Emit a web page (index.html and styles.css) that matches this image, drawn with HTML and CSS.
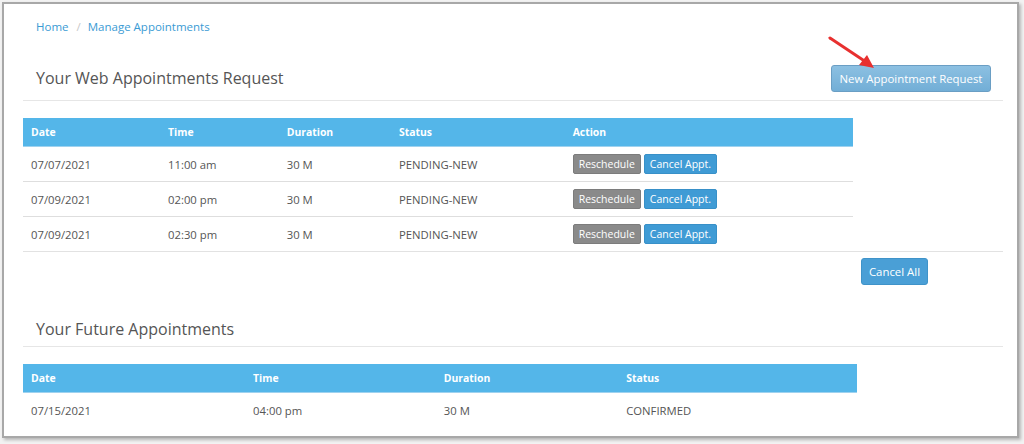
FILE: index.html
```html
<!DOCTYPE html>
<html>
<head>
<meta charset="utf-8">
<link rel="stylesheet" href="styles.css">
</head>
<body>
<div class="frame">
  <nav class="breadcrumb"><a>Home</a><span class="sep">/</span><a>Manage Appointments</a></nav>

  <div class="section-head">
    <h2>Your Web Appointments Request</h2>
    <button class="btn btn-new">New Appointment Request</button>
  </div>

  <table class="grid grid-req">
    <thead>
      <tr><th class="c1">Date</th><th class="c2">Time</th><th class="c3">Duration</th><th class="c4">Status</th><th class="c5">Action</th></tr>
    </thead>
    <tbody>
      <tr><td>07/07/2021</td><td>11:00 am</td><td>30 M</td><td>PENDING-NEW</td><td><span class="mini grey">Reschedule</span><span class="mini blue">Cancel Appt.</span></td></tr>
      <tr><td>07/09/2021</td><td>02:00 pm</td><td>30 M</td><td>PENDING-NEW</td><td><span class="mini grey">Reschedule</span><span class="mini blue">Cancel Appt.</span></td></tr>
      <tr><td>07/09/2021</td><td>02:30 pm</td><td>30 M</td><td>PENDING-NEW</td><td><span class="mini grey">Reschedule</span><span class="mini blue">Cancel Appt.</span></td></tr>
    </tbody>
  </table>

  <div class="actions">
    <div class="actions-inner"><button class="btn btn-cancel-all">Cancel All</button></div>
  </div>

  <div class="section-head section-head-2">
    <h2>Your Future Appointments</h2>
  </div>

  <table class="grid grid-future">
    <thead>
      <tr><th class="d1">Date</th><th class="d2">Time</th><th class="d3">Duration</th><th class="d4">Status</th></tr>
    </thead>
    <tbody>
      <tr><td>07/15/2021</td><td>04:00 pm</td><td>30 M</td><td>CONFIRMED</td></tr>
    </tbody>
  </table>

  <svg class="arrow" width="60" height="44" viewBox="0 0 60 44">
    <line x1="4" y1="3" x2="40" y2="27" stroke="#e8302f" stroke-width="3" stroke-linecap="round"/>
    <polygon points="48,33 33,30 41,20" fill="#e8302f"/>
  </svg>
</div>
</body>
</html>
```

FILE: styles.css
```css
html, body {
  margin: 0;
  padding: 0;
  background: #f2f2f2;
}
body {
  width: 1024px;
  height: 444px;
  overflow: hidden;
  font-family: "Open Sans", "DejaVu Sans", sans-serif;
  color: #555;
}
.frame {
  position: relative;
  box-sizing: border-box;
  margin: 2px 0 0 2px;
  width: 1017px;
  height: 436px;
  background: #fff;
  border: 2px solid #a8a8a8;
  box-shadow: 2px 2px 3px rgba(0,0,0,0.25);
  padding: 13px 14px 0 19px;
  overflow: hidden;
}
.breadcrumb {
  padding-left: 13px;
  height: 20px;
  line-height: 20px;
  font-size: 11.5px;
  color: #3a9bd4;
}
.breadcrumb .sep {
  color: #c8c8c8;
  margin: 0 7px 0 8px;
}
.section-head {
  margin-top: 19px;
  height: 44px;
  display: flex;
  align-items: center;
  justify-content: space-between;
  padding: 0 12px 0 13px;
  border-bottom: 1px solid #e6e6e6;
}
.section-head h2 {
  margin: 0;
  font-size: 16px;
  font-weight: normal;
  color: #555;
}
.section-head-2 {
  margin-top: 26px;
  height: 35px;
}
.btn {
  font-family: "Open Sans", "DejaVu Sans", sans-serif;
  color: #fff;
  border-radius: 3px;
  cursor: pointer;
}
.btn-new {
  width: 160px;
  height: 27px;
  font-size: 11.4px;
  padding: 0;
  background: linear-gradient(#8cc0e2, #72aed6);
  border: 1px solid #6a9ec4;
}
.grid {
  border-collapse: collapse;
  margin-top: 17px;
  table-layout: fixed;
}
.grid-req { width: 830px; }
.grid-future { width: 834px; }
.grid th {
  background: #54b6e9;
  color: #fff;
  font-size: 10.4px;
  font-weight: bold;
  text-align: left;
  height: 28px;
  padding: 0 0 0 8px;
  border-bottom: 1px solid #9fd2ef;
}
.grid td {
  font-size: 11.3px;
  height: 34px;
  padding: 0 0 0 8px;
  border-bottom: 1px solid #dedede;
  color: #555;
  white-space: nowrap;
}
.grid-req tbody tr:last-child td { border-bottom: none; }
.grid-future tbody tr:last-child td { border-bottom: none; }
.c1 { width: 129px; }
.c2 { width: 110.7px; }
.c3 { width: 104.3px; }
.c4 { width: 165.7px; }
.c5 { width: 280.3px; }
.d1 { width: 214px; }
.d2 { width: 182.7px; }
.d3 { width: 174.3px; }
.d4 { width: 230.7px; }
.mini {
  display: inline-block;
  box-sizing: border-box;
  height: 20px;
  line-height: 18px;
  font-size: 10.5px;
  color: #fff;
  border-radius: 2px;
  padding: 0 5px;
  vertical-align: middle;
}
.mini + .mini { margin-left: 3px; }
.mini.grey { background: #8a8a8a; border: 1px solid #7c7c7c; }
.mini.blue { background: #3f9bd5; border: 1px solid #3890c8; }
.actions {
  border-top: 1px solid #e2e2e2;
  padding-top: 6px;
}
.actions-inner {
  width: 905px;
  display: flex;
  justify-content: flex-end;
}
.btn-cancel-all {
  width: 67px;
  height: 27px;
  padding: 0;
  font-size: 11.4px;
  background: #4a9fd6;
  border: 1px solid #3f93c9;
}
.arrow {
  position: absolute;
  left: 822px;
  top: 31px;
}
```
